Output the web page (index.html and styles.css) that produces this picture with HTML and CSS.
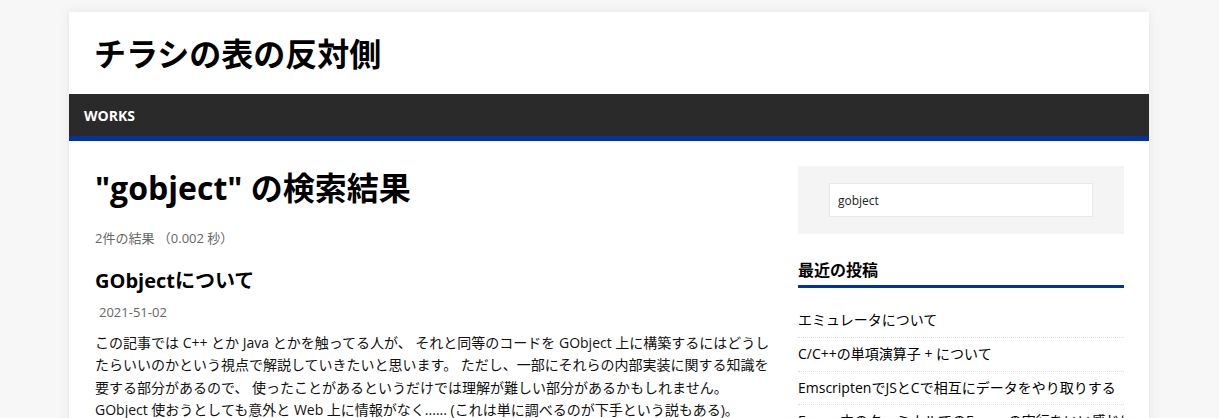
FILE: index.html
```html
<!DOCTYPE html>
<html lang="ja">
<head>
<meta charset="utf-8">
<title>チラシの表の反対側</title>
<link rel="stylesheet" href="styles.css">
</head>
<body>
<div class="wrapper">
  <header class="site-header">
    <div class="site-title">チラシの表の反対側</div>
  </header>
  <nav class="main-nav">
    <a class="nav-item" href="#">WORKS</a>
  </nav>
  <div class="content">
    <main class="main">
      <h1 class="page-title">"gobject" の検索結果</h1>
      <div class="result-count">2件の結果 （0.002 秒）</div>
      <article class="post">
        <h2 class="post-title">GObjectについて</h2>
        <div class="post-date">2021-51-02</div>
        <p class="post-excerpt">この記事では C++ とか Java とかを触ってる人が、 それと同等のコードを GObject 上に構築するにはどうしたらいいのかという視点で解説していきたいと思います。 ただし、一部にそれらの内部実装に関する知識を要する部分があるので、 使ったことがあるというだけでは理解が難しい部分があるかもしれません。 GObject 使おうとしても意外と Web 上に情報がなく...... (これは単に調べるのが下手という説もある)。</p>
      </article>
    </main>
    <aside class="sidebar">
      <div class="search-widget">
        <div class="search-input">gobject</div>
      </div>
      <div class="widget">
        <h3 class="widget-title">最近の投稿</h3>
        <ul class="recent-list">
          <li class="recent-item">エミュレータについて</li>
          <li class="recent-item">C/C++の単項演算子 + について</li>
          <li class="recent-item">EmscriptenでJSとCで相互にデータをやり取りする</li>
          <li class="recent-item">Emacs中のターミナルでのEmacsの実行をいい感じにする</li>
        </ul>
      </div>
    </aside>
  </div>
</div>
</body>
</html>
```

FILE: styles.css
```css
html, body {
  margin: 0;
  padding: 0;
}
body {
  background: #f7f7f7;
  font-family: "Open Sans", "Noto Sans CJK JP", sans-serif;
  color: #000;
}
.wrapper {
  width: 1080px;
  margin: 12px 0 0 calc(50% - 540.5px);
  background: #fff;
  box-shadow: 0 0 10px rgba(0, 0, 0, 0.08);
}
.site-header {
  height: 82px;
  padding: 0 25px;
  display: flex;
  align-items: center;
  box-sizing: border-box;
}
.site-title {
  font-size: 32px;
  font-weight: 700;
  line-height: 1.3;
  margin-top: 2px;
}
.main-nav {
  height: 42px;
  background: #2a2a2a;
  border-bottom: 5px solid #0033a0;
  display: flex;
  align-items: center;
  padding-left: 15px;
}
.nav-item {
  color: #fff;
  text-decoration: none;
  font-size: 14px;
  font-weight: 700;
  margin-top: 1px;
}
.content {
  display: flex;
  gap: 28px;
  padding: 25px 25px 40px 26px;
}
.main {
  width: 675px;
}
.page-title {
  margin: 0;
  font-size: 32px;
  font-weight: 700;
  line-height: 44.8px;
}
.result-count {
  margin-top: 17px;
  font-size: 13px;
  line-height: 20px;
  color: #666;
}
.post-title {
  margin: 19px 0 0;
  font-size: 20px;
  font-weight: 700;
  line-height: 28px;
}
.post-date {
  margin-top: 7px;
  padding-left: 4px;
  font-size: 13px;
  line-height: 20px;
  color: #666;
}
.post-excerpt {
  margin: 10px 0 0;
  font-size: 14px;
  line-height: 22.4px;
  color: #111;
}
.sidebar {
  width: 326px;
}
.search-widget {
  background: #f4f4f4;
  padding: 17px 31px;
}
.search-input {
  height: 34px;
  box-sizing: border-box;
  background: #fff;
  border: 1px solid #e8e8e8;
  padding-left: 8px;
  font-size: 12px;
  display: flex;
  align-items: center;
  color: #222;
}
.widget {
  margin-top: 24px;
}
.widget-title {
  margin: 0;
  font-size: 16px;
  font-weight: 700;
  line-height: 24px;
  padding-bottom: 3px;
  border-bottom: 3px solid #0033a0;
}
.recent-list {
  list-style: none;
  margin: 16px 0 0;
  padding: 0;
}
.recent-item {
  font-size: 14px;
  line-height: 16.8px;
  padding: 8px 0;
  border-bottom: 1px dotted #ddd;
  white-space: nowrap;
  overflow: hidden;
}
```
